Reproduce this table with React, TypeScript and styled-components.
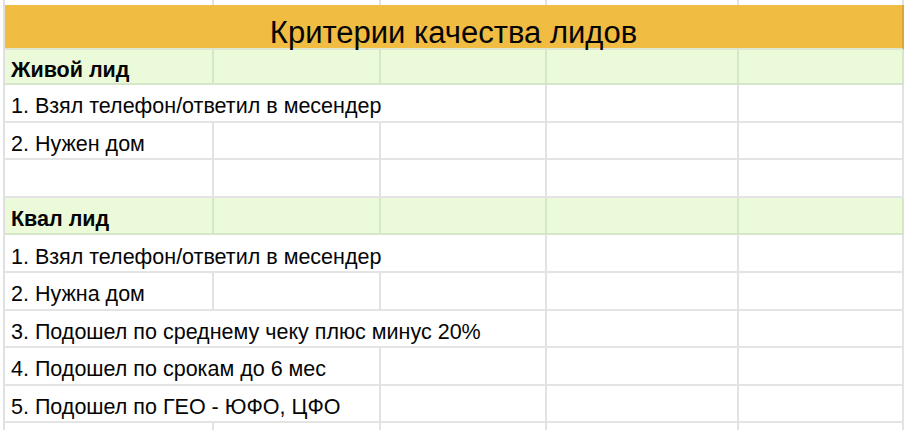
import React from "react";
import styled, { createGlobalStyle } from "styled-components";

const Global = createGlobalStyle`
  html, body { margin: 0; padding: 0; background: #ffffff; }
  body { font-family: "Liberation Sans", Arial, sans-serif; color: #050505; }
`;

const Sheet = styled.div`
  display: grid;
  grid-template-columns: 209px 167px 166px 192px 165px;
  grid-template-rows: 5px 45px 35px repeat(10, 37.6px);
  margin-left: 3px;
  width: 901px;
  border-left: 2px solid #e0e0e0;
  overflow: hidden;
  height: 430px;
`;

type Tone = "plain" | "green" | "strip";

const Cell = styled.div<{ $span?: number; $tone?: Tone; $bold?: boolean }>`
  grid-column: span ${(p) => p.$span ?? 1};
  display: flex;
  align-items: center;
  padding: 8px 7px 0 6px;
  box-sizing: border-box;
  white-space: nowrap;
  overflow: visible;
  font-size: 21.5px;
  font-weight: ${(p) => (p.$bold ? 700 : 400)};
  background: ${(p) => (p.$tone === "green" ? "#ebfbd9" : "#ffffff")};
  border-right: 2px solid
    ${(p) => (p.$tone === "green" ? "#d6e6cb" : "#e2e2e2")};
  border-bottom: ${(p) =>
    p.$tone === "strip"
      ? "2px solid #cfcfcf"
      : p.$tone === "green"
      ? "2px solid #d6e6cb"
      : "2px solid #e4e4e4"};
`;

const Title = styled.div`
  grid-column: span 5;
  display: flex;
  align-items: center;
  justify-content: center;
  background: #f0bc42;
  font-size: 31px;
  padding: 13px 0 0 0;
  border-right: 2px solid #d9a83a;
  border-bottom: 2px solid #dfe6cf;
  box-sizing: border-box;
  white-space: nowrap;
`;

type Row = { cells: { text?: string; span?: number }[]; tone?: Tone; bold?: boolean };

const rows: Row[] = [
  { tone: "green", bold: true, cells: [{ text: "Живой лид" }, {}, {}, {}, {}] },
  { cells: [{ text: "1. Взял телефон/ответил в месендер", span: 3 }, {}, {}] },
  { cells: [{ text: "2. Нужен дом" }, {}, {}, {}, {}] },
  { cells: [{}, {}, {}, {}, {}] },
  { tone: "green", bold: true, cells: [{ text: "Квал лид" }, {}, {}, {}, {}] },
  { cells: [{ text: "1. Взял телефон/ответил в месендер", span: 3 }, {}, {}] },
  { cells: [{ text: "2. Нужна дом" }, {}, {}, {}, {}] },
  { cells: [{ text: "3. Подошел по среднему чеку плюс минус 20%", span: 3 }, {}, {}] },
  { cells: [{ text: "4. Подошел по срокам до 6 мес", span: 2 }, {}, {}, {}] },
  { cells: [{ text: "5. Подошел по ГЕО - ЮФО, ЦФО", span: 2 }, {}, {}, {}] },
  { cells: [{}, {}, {}, {}, {}] },
];

export default function App() {
  return (
    <>
      <Global />
      <Sheet>
        {[0, 1, 2, 3, 4].map((i) => (
          <Cell key={`s${i}`} $tone="strip" />
        ))}
        <Title>Критерии качества лидов</Title>
        {rows.map((r, ri) =>
          r.cells.map((c, ci) => (
            <Cell key={`${ri}-${ci}`} $span={c.span} $tone={r.tone} $bold={r.bold}>
              {c.text}
            </Cell>
          ))
        )}
      </Sheet>
    </>
  );
}
